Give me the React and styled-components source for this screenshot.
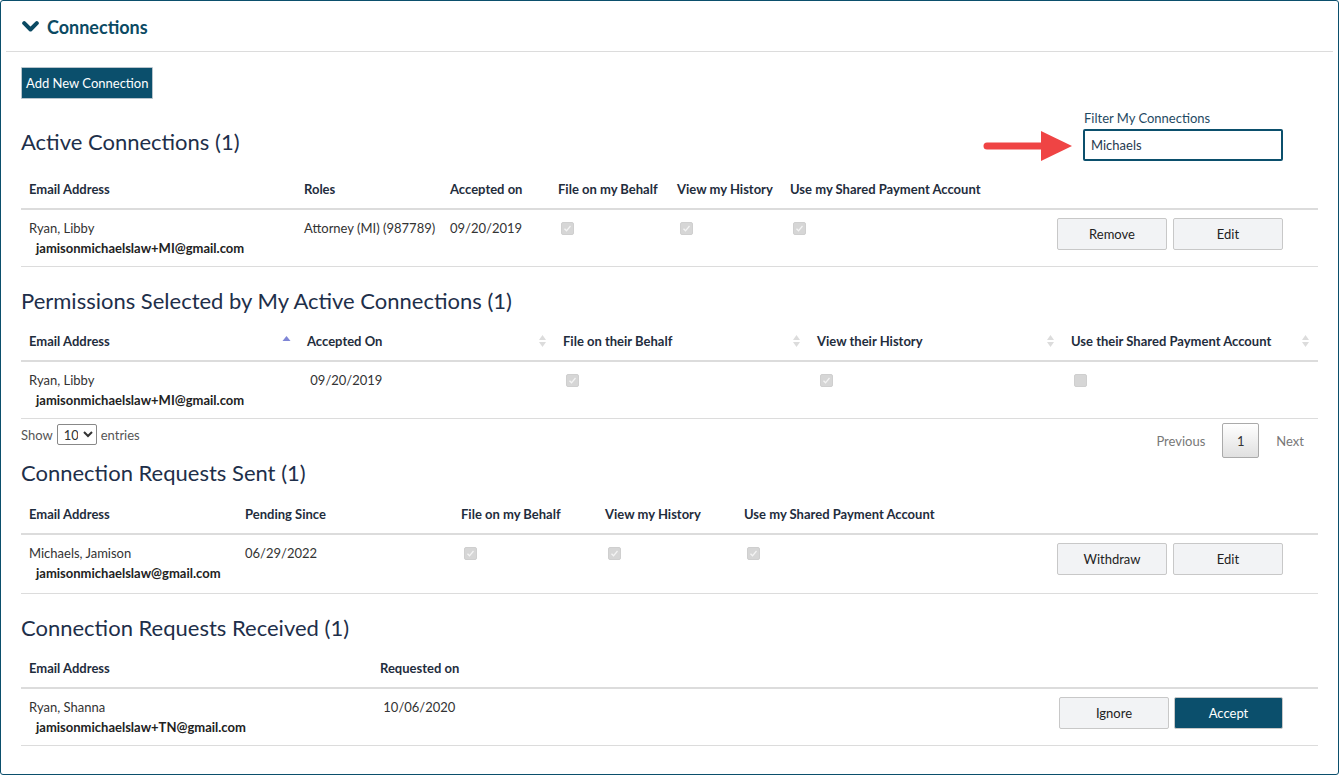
import React from 'react';
import styled, { createGlobalStyle } from 'styled-components';

const GlobalStyle = createGlobalStyle`
html, body {
    margin: 0;
    padding: 0;
    background: #fff;
}
body {
    font-family: Lato, "Open Sans", Arial, sans-serif;
    font-size: 13px;
    color: #333;
}
* { box-sizing: border-box; }
`;

const Frame = styled.div`
width: 1339px;
height: 775px;
border: 1px solid #0b4f6c;
border-radius: 3px;
overflow: hidden;
`;

const PanelHeader = styled.div`
display: flex;
align-items: center;
gap: 8px;
height: 51px;
margin: 0 5px;
padding: 2px 0 0 16px;
border-bottom: 1px solid #dcdcdc;
color: #0b4a63;
font-size: 18px;
font-weight: 700;
`;

const Body = styled.div`
padding: 15px 20px 0 20px;
`;

const PrimaryButton = styled.button`
font-family: inherit;
font-size: 13px;
color: #fff;
background: #0b4f6c;
border: 1px solid #b8c4cc;
border-radius: 1px;
height: 32px;
padding: 0 4px;
cursor: pointer;
`;

const TitleRow = styled.div`
display: flex;
justify-content: space-between;
align-items: flex-start;
margin-top: 10px;
`;

const Title = styled.h2`
margin: ${p => p.$top ?? 19}px 0 0 0;
font-size: 22px;
font-weight: 400;
line-height: 30px;
color: #1e2f4a;
`;

const Filter = styled.div`
position: relative;
margin-right: 35px;
width: 200px;
`;

const FilterLabel = styled.label`
display: block;
line-height: 18px;
color: #1f4a63;
font-size: 13px;
padding-left: 1px;
margin-bottom: 2px;
`;

const FilterInput = styled.input`
width: 200px;
height: 32px;
border: 2px solid #0b4f6c;
border-radius: 2px;
padding: 0 6px;
font-family: inherit;
font-size: 13px;
color: #1f3a4f;
outline: none;
`;

const Arrow = styled.svg`
position: absolute;
left: -100px;
top: 20px;
`;

const Table = styled.table`
width: 100%;
border-collapse: collapse;
table-layout: fixed;
margin-top: ${p => p.$top ?? 6}px;
`;

const Th = styled.th`
text-align: left;
font-weight: 700;
color: #1f2d3d;
line-height: 18px;
padding: 10px 8px;
border-bottom: 2px solid #dcdcdc;
white-space: nowrap;
`;

const HeadInner = styled.div`
display: flex;
justify-content: space-between;
align-items: center;
`;

const Td = styled.td`
vertical-align: top;
white-space: nowrap;
line-height: 20px;
padding: 8px 8px ${p => p.$bottom ?? 8}px 8px;
border-bottom: 1px solid #dcdcdc;
color: #333;
text-align: ${p => (p.$right ? 'right' : 'left')};
padding-right: ${p => (p.$right ? 35 : 8)}px;
`;

const Email = styled.div`
font-weight: 700;
color: #222;
padding-left: 7px;
`;

const Check = styled.span`
display: inline-block;
width: 13px;
height: 13px;
margin: 4px 0 0 3px;
border-radius: 2px;
background: #d6d6d6;
border: 1px solid #cfcfcf;
position: relative;
vertical-align: top;
`;

const Actions = styled.div`
display: flex;
justify-content: flex-end;
gap: ${p => p.$gap ?? 6}px;
`;

const ActionButton = styled.button`
width: ${p => p.$w ?? 110}px;
height: 32px;
font-family: inherit;
font-size: 13px;
border-radius: 2px;
border: 1px solid #c8c8c8;
background: ${p => (p.$primary ? '#0b4f6c' : '#f2f3f5')};
color: ${p => (p.$primary ? '#fff' : '#222')};
cursor: pointer;
`;

const Footer = styled.div`
display: flex;
justify-content: space-between;
align-items: flex-start;
`;

const Length = styled.div`
display: flex;
align-items: center;
gap: 4px;
margin-top: 5px;
color: #555;
`;

const LengthSelect = styled.select`
font-family: inherit;
font-size: 13px;
height: 21px;
width: 40px;
border: 1px solid #888;
border-radius: 2px;
background: #fff;
color: #333;
padding: 0 2px;
`;

const Pager = styled.div`
display: flex;
align-items: center;
gap: 17px;
margin-top: 4px;
margin-right: 14px;
color: #777;
`;

const PageButton = styled.span`
display: flex;
align-items: center;
justify-content: center;
width: 37px;
height: 35px;
border: 1px solid #aaa;
border-radius: 2px;
background: linear-gradient(#fff, #e0e0e0);
color: #333;
`;

const Chevron = () => (
    <svg width="17" height="12" viewBox="0 0 17 12">
        <path d="M2.2 2.2 L8.5 8.5 L14.8 2.2" stroke="#0b4a63" strokeWidth="4" fill="none" strokeLinecap="round" strokeLinejoin="round" />
    </svg>
);

const CheckBox = ({ on = true }) => (
    <Check>
        {on && (
            <svg width="11" height="11" viewBox="0 0 11 11" style={{ position: 'absolute', left: 0, top: 0 }}>
                <path d="M2.5 5.8 L4.5 7.8 L8.5 3" stroke="#f4f4f4" strokeWidth="1.3" fill="none" />
            </svg>
        )}
    </Check>
);

const SortIcon = ({ asc }) => (
    <svg width="9" height="14" viewBox="0 0 9 14">
        {asc ? (
            <path d="M4.5 2 L8.5 7 L0.5 7 Z" fill="#7f86d6" />
        ) : (
            <>
                <path d="M4.5 1 L8 6 L1 6 Z" fill="#dcdcdc" />
                <path d="M4.5 13 L8 8 L1 8 Z" fill="#dcdcdc" />
            </>
        )}
    </svg>
);

const SortTh = ({ children, asc, w }) => (
    <Th style={{ width: w }}>
        <HeadInner>
            <span>{children}</span>
            {asc ? <SortIcon asc /> : <SortIcon />}
        </HeadInner>
    </Th>
);

const Person = ({ name, email }) => (
    <>
        <div>{name}</div>
        <Email>{email}</Email>
    </>
);

const App = () => {
    const [filter, setFilter] = React.useState('Michaels');

    return (
        <Frame>
            <GlobalStyle />
            <PanelHeader>
                <Chevron />
                <span>Connections</span>
            </PanelHeader>
            <Body>
                <PrimaryButton>Add New Connection</PrimaryButton>

                <TitleRow>
                    <Title $top={18}>Active Connections (1)</Title>
                    <Filter>
                        <FilterLabel>Filter My Connections</FilterLabel>
                        <FilterInput value={filter} onChange={e => setFilter(e.target.value)} />
                        <Arrow width="92" height="34" viewBox="0 0 92 34">
                            <line x1="4" y1="17" x2="62" y2="17" stroke="#ef4444" strokeWidth="7" strokeLinecap="round" />
                            <path d="M58 2 L89 17 L58 32 Z" fill="#ef4444" />
                        </Arrow>
                    </Filter>
                </TitleRow>

                <Table $top={9}>
                    <thead>
                        <tr>
                            <Th style={{ width: 275 }}>Email Address</Th>
                            <Th style={{ width: 146 }}>Roles</Th>
                            <Th style={{ width: 108 }}>Accepted on</Th>
                            <Th style={{ width: 119 }}>File on my Behalf</Th>
                            <Th style={{ width: 113 }}>View my History</Th>
                            <Th style={{ width: 260 }}>Use my Shared Payment Account</Th>
                            <Th></Th>
                        </tr>
                    </thead>
                    <tbody>
                        <tr>
                            <Td><Person name="Ryan, Libby" email="jamisonmichaelslaw+MI@gmail.com" /></Td>
                            <Td>Attorney (MI) (987789)</Td>
                            <Td>09/20/2019</Td>
                            <Td><CheckBox /></Td>
                            <Td><CheckBox /></Td>
                            <Td><CheckBox /></Td>
                            <Td $right>
                                <Actions>
                                    <ActionButton>Remove</ActionButton>
                                    <ActionButton>Edit</ActionButton>
                                </Actions>
                            </Td>
                        </tr>
                    </tbody>
                </Table>

                <Title>Permissions Selected by My Active Connections (1)</Title>
                <Table>
                    <thead>
                        <tr>
                            <SortTh w={278} asc>Email Address</SortTh>
                            <SortTh w={256}>Accepted On</SortTh>
                            <SortTh w={254}>File on their Behalf</SortTh>
                            <SortTh w={254}>View their History</SortTh>
                            <SortTh>Use their Shared Payment Account</SortTh>
                        </tr>
                    </thead>
                    <tbody>
                        <tr>
                            <Td><Person name="Ryan, Libby" email="jamisonmichaelslaw+MI@gmail.com" /></Td>
                            <Td>&nbsp;09/20/2019</Td>
                            <Td><CheckBox /></Td>
                            <Td><CheckBox /></Td>
                            <Td><CheckBox on={false} /></Td>
                        </tr>
                    </tbody>
                </Table>
                <Footer>
                    <Length>
                        Show
                        <LengthSelect defaultValue="10">
                            <option value="10">10</option>
                            <option value="25">25</option>
                            <option value="50">50</option>
                            <option value="100">100</option>
                        </LengthSelect>
                        entries
                    </Length>
                    <Pager>
                        <span>Previous</span>
                        <PageButton>1</PageButton>
                        <span>Next</span>
                    </Pager>
                </Footer>

                <Title $top={0}>Connection Requests Sent (1)</Title>
                <Table $top={7}>
                    <thead>
                        <tr>
                            <Th style={{ width: 216 }}>Email Address</Th>
                            <Th style={{ width: 216 }}>Pending Since</Th>
                            <Th style={{ width: 144 }}>File on my Behalf</Th>
                            <Th style={{ width: 139 }}>View my History</Th>
                            <Th style={{ width: 290 }}>Use my Shared Payment Account</Th>
                            <Th></Th>
                        </tr>
                    </thead>
                    <tbody>
                        <tr>
                            <Td $bottom={10}><Person name="Michaels, Jamison" email="jamisonmichaelslaw@gmail.com" /></Td>
                            <Td $bottom={10}>06/29/2022</Td>
                            <Td $bottom={10}><CheckBox /></Td>
                            <Td $bottom={10}><CheckBox /></Td>
                            <Td $bottom={10}><CheckBox /></Td>
                            <Td $bottom={10} $right>
                                <Actions>
                                    <ActionButton>Withdraw</ActionButton>
                                    <ActionButton>Edit</ActionButton>
                                </Actions>
                            </Td>
                        </tr>
                    </tbody>
                </Table>

                <Title $top={19}>Connection Requests Received (1)</Title>
                <Table>
                    <thead>
                        <tr>
                            <Th style={{ width: 351 }}>Email Address</Th>
                            <Th style={{ width: 300 }}>Requested on</Th>
                            <Th></Th>
                        </tr>
                    </thead>
                    <tbody>
                        <tr>
                            <Td><Person name="Ryan, Shanna" email="jamisonmichaelslaw+TN@gmail.com" /></Td>
                            <Td>&nbsp;10/06/2020</Td>
                            <Td $right>
                                <Actions $gap={5}>
                                    <ActionButton>Ignore</ActionButton>
                                    <ActionButton $primary $w={109}>Accept</ActionButton>
                                </Actions>
                            </Td>
                        </tr>
                    </tbody>
                </Table>
            </Body>
        </Frame>
    );
};

export default App;
